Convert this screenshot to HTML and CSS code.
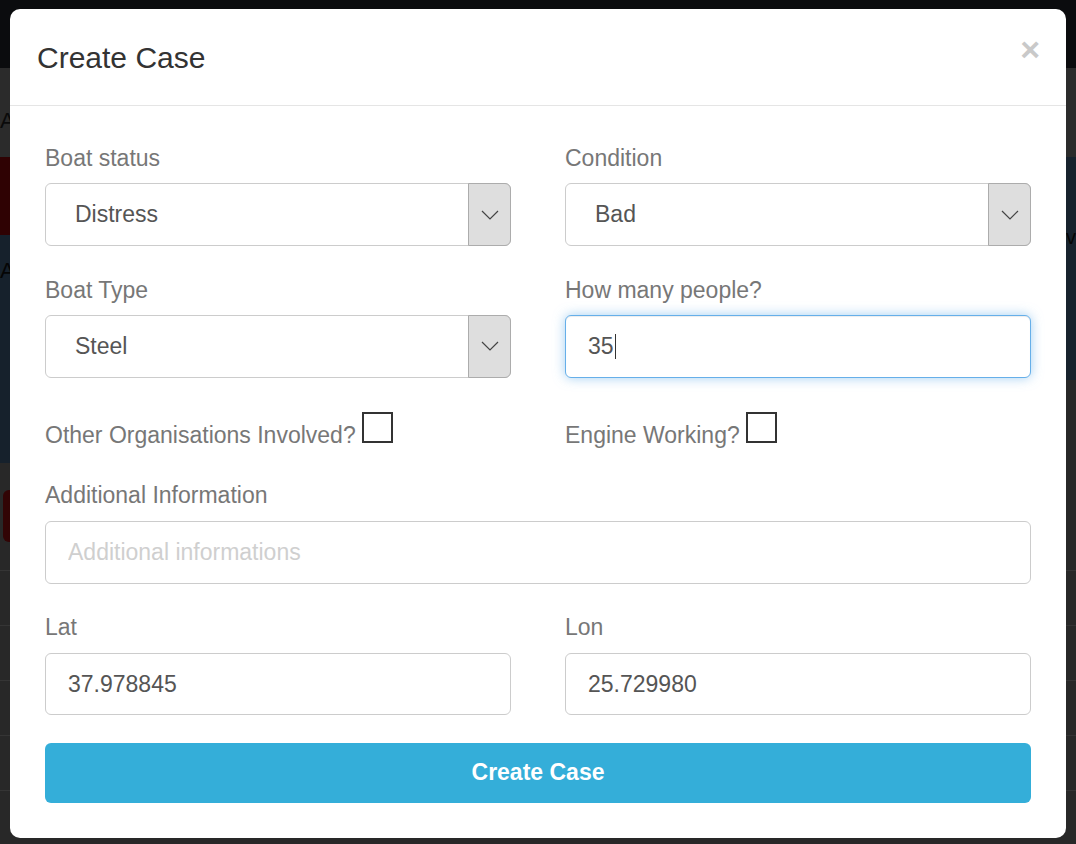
FILE: index.html
```html
<!DOCTYPE html>
<html lang="en">
<head>
<meta charset="utf-8">
<title>Create Case</title>
<link rel="stylesheet" href="styles.css">
</head>
<body>
<div class="page">
  <header class="nav"></header>
  <div class="toolbar"><span class="tb-letter">A</span></div>
  <section class="hero">
    <div class="hero-left">
      <div class="hero-alert"></div>
      <div class="hero-map"><span class="map-letter">A</span></div>
    </div>
    <div class="hero-right">
      <div class="hero-map-r"><span class="map-letter-r">v</span></div>
    </div>
  </section>
  <section class="content">
    <div class="danger-btn"></div>
    <div class="table">
      <div class="table-row"></div>
      <div class="table-row"></div>
      <div class="table-row"></div>
      <div class="table-row"></div>
      <div class="table-row"></div>
    </div>
  </section>
</div>

<div class="modal" role="dialog">
  <div class="modal-header">
    <h4 class="modal-title">Create Case</h4>
    <span class="close">&times;</span>
  </div>
  <div class="modal-body">
    <div class="grid2">
      <div class="field">
        <label class="lbl lbl-gap-lg">Boat status</label>
        <div class="select"><span class="select-value">Distress</span><span class="select-arrow"><svg width="18" height="10" viewBox="0 0 18 10"><polyline points="1,1 9,9 17,1" fill="none" stroke="#444" stroke-width="1.2"/></svg></span></div>
      </div>
      <div class="field">
        <label class="lbl lbl-gap-lg">Condition</label>
        <div class="select"><span class="select-value">Bad</span><span class="select-arrow"><svg width="18" height="10" viewBox="0 0 18 10"><polyline points="1,1 9,9 17,1" fill="none" stroke="#444" stroke-width="1.2"/></svg></span></div>
      </div>
    </div>

    <div class="grid2 row2">
      <div class="field">
        <label class="lbl lbl-gap-lg">Boat Type</label>
        <div class="select select-sm"><span class="select-value">Steel</span><span class="select-arrow"><svg width="18" height="10" viewBox="0 0 18 10"><polyline points="1,1 9,9 17,1" fill="none" stroke="#444" stroke-width="1.2"/></svg></span></div>
      </div>
      <div class="field">
        <label class="lbl lbl-gap-lg">How many people?</label>
        <div class="input input-sm focus">35<span class="caret"></span></div>
      </div>
    </div>

    <div class="grid2 checks">
      <label class="check-label">Other Organisations Involved? <span class="cbox"></span></label>
      <label class="check-label">Engine Working? <span class="cbox"></span></label>
    </div>

    <div class="field row4">
      <label class="lbl lbl-gap-md">Additional Information</label>
      <input class="input input-md" type="text" placeholder="Additional informations">
    </div>

    <div class="grid2 row5">
      <div class="field">
        <label class="lbl lbl-gap-9">Lat</label>
        <input class="input" type="text" value="37.978845">
      </div>
      <div class="field">
        <label class="lbl lbl-gap-9">Lon</label>
        <input class="input" type="text" value="25.729980">
      </div>
    </div>

    <button class="btn-create" type="button">Create Case</button>
  </div>
</div>
</body>
</html>
```

FILE: styles.css
```css
* { box-sizing: border-box; }
html, body { margin: 0; padding: 0; }
body {
  width: 1076px;
  height: 844px;
  overflow: hidden;
  position: relative;
  font-family: "Liberation Sans", Arial, sans-serif;
  background: #1e1e1e;
}

/* dimmed page behind the modal */
.page { display: flex; flex-direction: column; height: 844px; }
.nav { height: 68px; flex: none; background: #0b0c0e; }
.toolbar { height: 89px; flex: none; background: #2b2b2b; padding-top: 42px; }
.tb-letter { font-size: 22px; color: #0a0a0a; line-height: 1; }
.hero { height: 306px; flex: none; display: flex; }
.hero-left { flex: 1; display: flex; flex-direction: column; }
.hero-alert { height: 78px; background: #2f0203; }
.hero-map { flex: 1; background: #16212c; padding-top: 25px; }
.map-letter { font-size: 22px; color: #050505; line-height: 1; }
.hero-right { flex: 1; display: flex; flex-direction: column; background: #282828; }
.hero-map-r { height: 223px; background: #17222d; padding: 70px 0 0 0; text-align: right; }
.map-letter-r { font-size: 20px; color: #050505; line-height: 1; }
.content { flex: 1; background: #282828; padding-top: 27px; }
.danger-btn { margin-left: 3px; width: 220px; height: 52px; background: #320405; border-radius: 6px; }
.table { margin-top: 28px; }
.table-row { height: 55px; border-top: 1px solid #353535; }

/* modal */
.modal {
  position: absolute;
  left: 10px;
  top: 9px;
  width: 1056px;
  height: 829px;
  background: #fff;
  border-radius: 10px;
  color: #777;
}
.modal-header {
  height: 97px;
  border-bottom: 1px solid #e5e5e5;
  display: flex;
  align-items: center;
  justify-content: space-between;
  padding: 0 26px 0 27px;
}
.modal-title {
  margin: 0;
  font-size: 30px;
  line-height: 33px;
  font-weight: normal;
  color: #333;
}
.close {
  align-self: flex-start;
  margin-top: 23px;
  font-size: 34px;
  line-height: 34px;
  font-weight: bold;
  color: #c9c9c9;
}
.modal-body { padding: 35.5px 35px 36px; display: flex; flex-direction: column; }

.grid2 { display: grid; grid-template-columns: 466px 466px; column-gap: 54px; }
.field { display: flex; flex-direction: column; }
.lbl { display: block; font-size: 23px; line-height: 33px; color: #777; }
.lbl-gap-lg { margin-bottom: 8.5px; }
.lbl-gap-md { margin-bottom: 9.5px; }
.lbl-gap-9 { margin-bottom: 9px; }

.select {
  height: 63px;
  border: 1px solid #ccc;
  border-radius: 6px;
  display: flex;
}
.select-sm { height: 62.5px; }
.select-value {
  flex: 1;
  display: flex;
  align-items: center;
  padding-left: 29px;
  font-size: 23px;
  color: #555;
}
.select-arrow {
  width: 43px;
  margin: -1px -1px -1px 0;
  background: #dedede;
  border: 1px solid #acacac;
  border-radius: 0 6px 6px 0;
  display: flex;
  align-items: center;
  justify-content: center;
}

.input {
  width: 100%;
  height: 62px;
  border: 1px solid #ccc;
  border-radius: 6px;
  padding: 0 0 0 22px;
  margin: 0;
  font-family: "Liberation Sans", Arial, sans-serif;
  font-size: 23px;
  color: #555;
  background: #fff;
  outline: none;
  display: flex;
  align-items: center;
}
.input::placeholder { color: #cfcfcf; }
.input-sm { height: 62.5px; }
.input-md { height: 62.5px; }
.focus {
  border-color: #66afe9;
  box-shadow: inset 0 1px 1px rgba(0,0,0,.075), 0 0 12px rgba(102,175,233,.6);
}
.caret { display: inline-block; width: 1px; height: 25px; background: #333; margin-left: 1px; }

.row2 { margin-top: 27.5px; }
.checks { margin-top: 34.5px; }
.check-label { font-size: 23px; line-height: 33px; color: #777; }
.cbox {
  display: inline-block;
  width: 31px;
  height: 31px;
  border: 2px solid #333;
  vertical-align: baseline;
}
.row4 { margin-top: 26.5px; }
.row5 { margin-top: 27.5px; }

.btn-create {
  margin-top: 27.5px;
  height: 60px;
  width: 100%;
  border: 0;
  border-radius: 6px;
  background: #34aed9;
  color: #fff;
  font-family: "Liberation Sans", Arial, sans-serif;
  font-size: 23px;
  font-weight: bold;
}
```
